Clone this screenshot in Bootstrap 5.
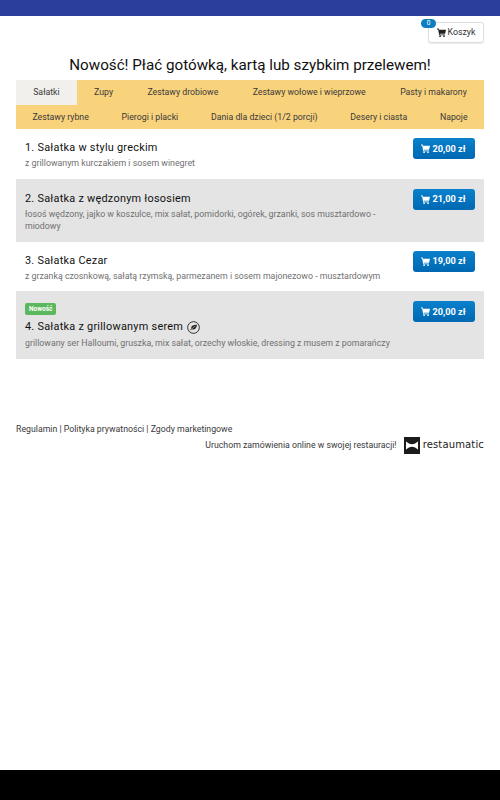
<!DOCTYPE html>
<html lang="pl">
<head>
<meta charset="UTF-8">
<meta name="viewport" content="width=device-width, initial-scale=1.0">
<title>Menu</title>
<link href="https://cdn.jsdelivr.net/npm/bootstrap@5.3.3/dist/css/bootstrap.min.css" rel="stylesheet">
<style>
    html, body { height: 100%; }
    body { font-family: Roboto, "Liberation Sans", sans-serif; font-size: 8.75px; color: #333; background: #fff; }
    .top-bar { height: 16px; background: #2c3e9c; flex: none; }
    .page-main { padding: 0 16px; }
    .cart-row { padding-top: 6px; }
    .cart-btn { position: relative; width: 56px; height: 21px; gap: 2px; font-size: 8.8px; line-height: 1; color: #333; border: 1px solid #ddd; border-radius: 3px; background: #fff; box-shadow: 0 1px 1px rgba(0,0,0,.08); }
    .cart-count { position: absolute; left: -8px; top: -4px; width: 15px; height: 9px; border-radius: 5px; background: #0b7fbf; color: #fff; font-size: 6.5px; line-height: 9px; text-align: center; }
    .promo { font-size: 15.2px; font-weight: 400; line-height: 20px; color: #111; text-align: center; margin: 12px 0 5px; }
    .cat-tabs { background: #f9d27c; }
    .cat-tab { flex-grow: 1; height: 24.5px; padding: 0 16px; line-height: 24.5px; text-align: center; color: #3a3a3a; text-decoration: none; white-space: nowrap; }
    .cat-tab.current { background: #f2f0ed; }
    .dish { padding: 11px 9px 8px; border-bottom: 1px solid #e6e6e6; min-height: 50.5px; }
    .dish-alt { background: #e4e4e4; border-bottom-color: #e4e4e4; }
    .dish-name { font-size: 10.9px; font-weight: 400; line-height: 16px; letter-spacing: .25px; color: #111; margin: 0 0 1px; }
    .dish-name.with-icon { margin-bottom: 2px; }
    .dish-desc { font-size: 8.8px; line-height: 12.5px; color: #707070; margin: 0; }
    .dish-body { padding-right: 20px; }
    .price-btn { flex: none; width: 62px; height: 21px; gap: 2px; margin-top: -2px; margin-right: .5px; padding: 0; font-size: 9.2px; font-weight: 700; line-height: 1; color: #fff; border: 0; border-radius: 3px; background: linear-gradient(#0a80cc, #0068b2); }
    .new-tag { display: table; height: 12px; padding: 0 4px; font-size: 6.5px; font-weight: 700; line-height: 12px; color: #fff; background: #5cb85c; border-radius: 2px; margin: 0 0 4px; }
    .site-foot { margin-top: 64px; color: #3a3a3a; font-size: 8.75px; line-height: 12px; }
    .site-foot a { color: #3a3a3a; text-decoration: none; }
    .brand-line { margin-top: 2px; }
    .brand-text { margin-right: 7px; }
    .brand-logo { margin-right: 3px; }
    .brand-name { font-family: "DejaVu Sans", sans-serif; font-size: 10px; letter-spacing: .15px; color: #222; }
    .black-strip { height: 30px; background: #000; flex: none; }
</style>
</head>
<body class="d-flex flex-column">
<div class="top-bar"></div>

<div class="page-main flex-grow-1">
    <div class="cart-row d-flex justify-content-end">
        <button type="button" class="cart-btn d-flex align-items-center justify-content-center p-0">
            <span class="cart-count">0</span>
            <svg width="9" height="9" viewBox="0 0 16 16"><path fill="#222" d="M0 1h3l.6 2H16l-1.6 7H5l.3 1.4H14V13H4L2 2.6H0z"/><circle cx="5.5" cy="14.5" r="1.5" fill="#222"/><circle cx="12.5" cy="14.5" r="1.5" fill="#222"/></svg>
            Koszyk
        </button>
    </div>

    <h1 class="promo">Nowość! Płać gotówką, kartą lub szybkim przelewem!</h1>

    <nav class="cat-tabs d-flex flex-wrap">
        <a class="cat-tab current" href="#">Sałatki</a>
        <a class="cat-tab" href="#">Zupy</a>
        <a class="cat-tab" href="#">Zestawy drobiowe</a>
        <a class="cat-tab" href="#">Zestawy wołowe i wieprzowe</a>
        <a class="cat-tab" href="#">Pasty i makarony</a>
        <a class="cat-tab" href="#">Zestawy rybne</a>
        <a class="cat-tab" href="#">Pierogi i placki</a>
        <a class="cat-tab" href="#">Dania dla dzieci (1/2 porcji)</a>
        <a class="cat-tab" href="#">Desery i ciasta</a>
        <a class="cat-tab" href="#">Napoje</a>
    </nav>

    <div class="dish d-flex justify-content-between align-items-start">
        <div class="dish-body">
            <h2 class="dish-name">1. Sałatka w stylu greckim</h2>
            <p class="dish-desc">z grillowanym kurczakiem i sosem winegret</p>
        </div>
        <button type="button" class="price-btn d-flex align-items-center justify-content-center">
            <svg width="9" height="9" viewBox="0 0 16 16"><path fill="#fff" d="M0 1h3l.6 2H16l-1.6 7H5l.3 1.4H14V13H4L2 2.6H0z"/><circle cx="5.5" cy="14.5" r="1.5" fill="#fff"/><circle cx="12.5" cy="14.5" r="1.5" fill="#fff"/></svg>
            20,00 zł
        </button>
    </div>

    <div class="dish dish-alt d-flex justify-content-between align-items-start">
        <div class="dish-body">
            <h2 class="dish-name">2. Sałatka z wędzonym łososiem</h2>
            <p class="dish-desc">łosoś wędzony, jajko w koszulce, mix sałat, pomidorki, ogórek, grzanki, sos musztardowo - miodowy</p>
        </div>
        <button type="button" class="price-btn d-flex align-items-center justify-content-center">
            <svg width="9" height="9" viewBox="0 0 16 16"><path fill="#fff" d="M0 1h3l.6 2H16l-1.6 7H5l.3 1.4H14V13H4L2 2.6H0z"/><circle cx="5.5" cy="14.5" r="1.5" fill="#fff"/><circle cx="12.5" cy="14.5" r="1.5" fill="#fff"/></svg>
            21,00 zł
        </button>
    </div>

    <div class="dish d-flex justify-content-between align-items-start">
        <div class="dish-body">
            <h2 class="dish-name">3. Sałatka Cezar</h2>
            <p class="dish-desc">z grzanką czosnkową, sałatą rzymską, parmezanem i sosem majonezowo - musztardowym</p>
        </div>
        <button type="button" class="price-btn d-flex align-items-center justify-content-center">
            <svg width="9" height="9" viewBox="0 0 16 16"><path fill="#fff" d="M0 1h3l.6 2H16l-1.6 7H5l.3 1.4H14V13H4L2 2.6H0z"/><circle cx="5.5" cy="14.5" r="1.5" fill="#fff"/><circle cx="12.5" cy="14.5" r="1.5" fill="#fff"/></svg>
            19,00 zł
        </button>
    </div>

    <div class="dish dish-alt d-flex justify-content-between align-items-start">
        <div class="dish-body">
            <span class="new-tag">Nowość</span>
            <h2 class="dish-name with-icon d-flex align-items-center gap-1">4. Sałatka z grillowanym serem
                <svg width="13" height="13" viewBox="0 0 14 14"><circle cx="7" cy="7" r="6.3" fill="none" stroke="#222" stroke-width="1"/><path fill="#222" d="M10.8 4C7.6 3.8 4.9 4.6 4.5 7.2c-.1.5 0 .9.2 1.3L3.2 9.8l.4.5 1.5-1.3c2.6 1 5-.6 5.7-5z"/><path fill="none" stroke="#e4e4e4" stroke-width=".6" d="M5.2 8.6c1-1.4 2.2-2.3 3.8-3"/></svg>
            </h2>
            <p class="dish-desc">grillowany ser Halloumi, gruszka, mix sałat, orzechy włoskie, dressing z musem z pomarańczy</p>
        </div>
        <button type="button" class="price-btn d-flex align-items-center justify-content-center">
            <svg width="9" height="9" viewBox="0 0 16 16"><path fill="#fff" d="M0 1h3l.6 2H16l-1.6 7H5l.3 1.4H14V13H4L2 2.6H0z"/><circle cx="5.5" cy="14.5" r="1.5" fill="#fff"/><circle cx="12.5" cy="14.5" r="1.5" fill="#fff"/></svg>
            20,00 zł
        </button>
    </div>

    <footer class="site-foot">
        <div><a href="#">Regulamin</a> | <a href="#">Polityka prywatności</a> | <a href="#">Zgody marketingowe</a></div>
        <div class="brand-line d-flex justify-content-end align-items-center">
            <span class="brand-text">Uruchom zamówienia online w swojej restauracji!</span>
            <svg class="brand-logo" width="16" height="17" viewBox="0 0 16 17"><rect width="16" height="17" fill="#1b1b1b"/><path fill="#fff" d="M2 4.5c2 1.6 3.8 2.8 6 2.8s4-1.2 6-2.8v8c-2-1.6-3.8-2.8-6-2.8s-4 1.2-6 2.8z"/></svg>
            <span class="brand-name">restaumatic</span>
        </div>
    </footer>
</div>

<div class="black-strip"></div>
<script src="https://cdn.jsdelivr.net/npm/bootstrap@5.3.3/dist/js/bootstrap.bundle.min.js"></script>
</body>
</html>
